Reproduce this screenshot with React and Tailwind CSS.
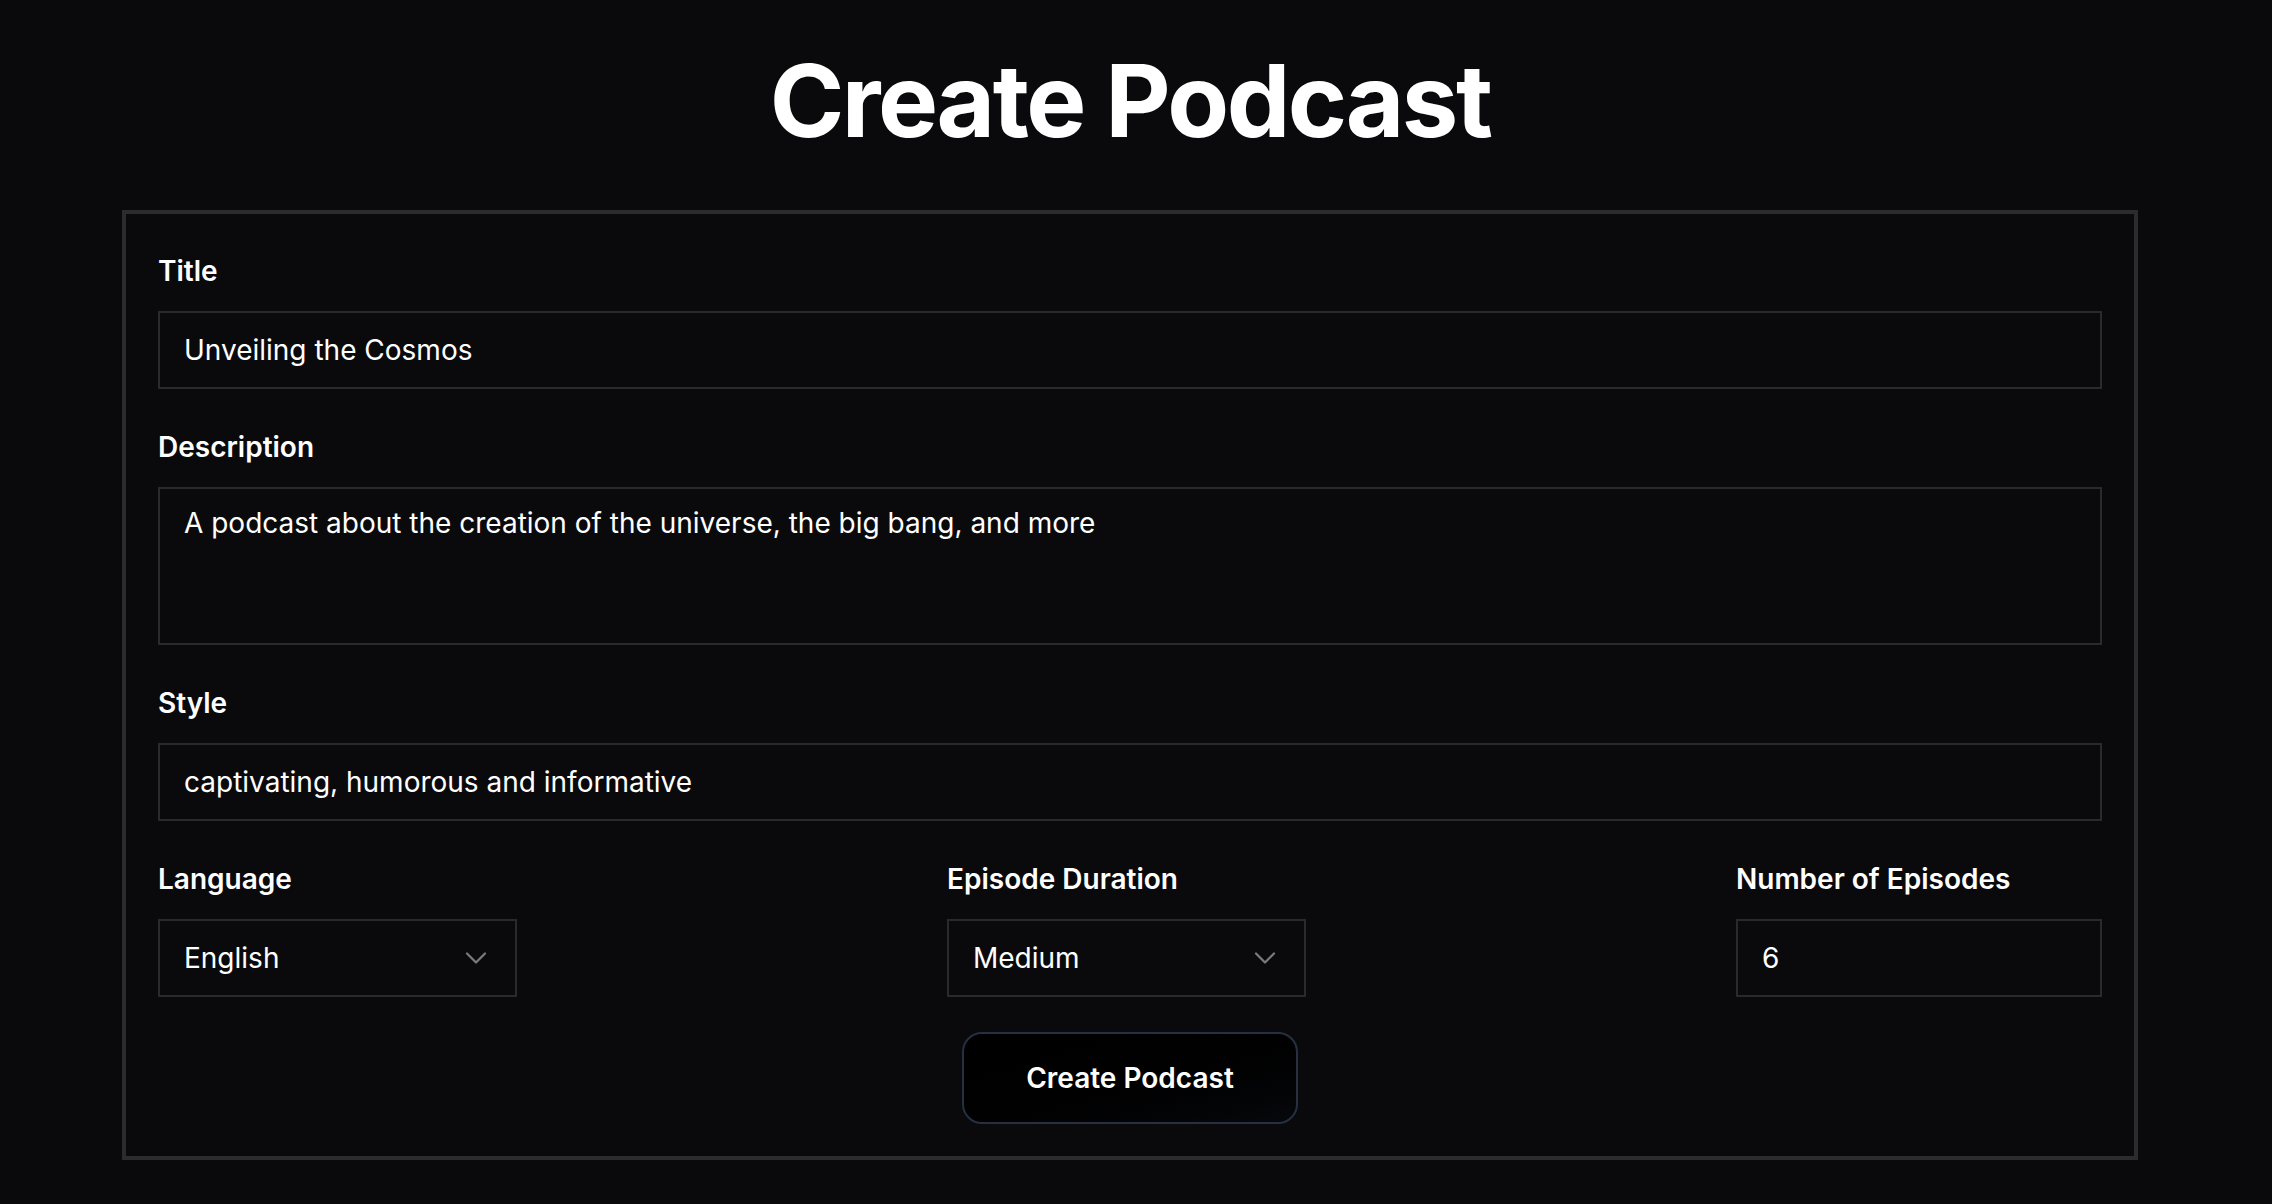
import { ChevronDown } from "lucide-react";

const font = { fontFamily: "Inter, 'Noto Sans', sans-serif" };

function Label({ children }) {
  return (
    <label className="mb-[18px] block text-[28px] font-semibold leading-[44px] text-white">
      {children}
    </label>
  );
}

function TextInput({ value, className = "" }) {
  return (
    <div
      className={`flex h-[78px] items-center border-2 border-[#2a2a2d] px-[24px] text-[28px] text-white ${className}`}
    >
      {value}
    </div>
  );
}

function Select({ value }) {
  return (
    <div className="flex h-[78px] w-[359px] items-center justify-between border-2 border-[#2a2a2d] pl-[24px] pr-[21px] text-[28px] text-white">
      <span>{value}</span>
      <ChevronDown size={36} strokeWidth={1.5} className="text-[#7a7a7e]" />
    </div>
  );
}

export default function App() {
  return (
    <div className="min-h-screen bg-[#0a0a0c] pt-[48px]" style={font}>
      <div className="ml-[122px] w-[2016px]">
        <h1 className="mb-[58px] text-center text-[101px] font-bold leading-[104px] tracking-tight text-white">
          Create Podcast
        </h1>

        <div className="border-4 border-[#2c2c2e] px-[32px] pb-[32px] pt-[35px]">
          <div className="mb-[36px]">
            <Label>Title</Label>
            <TextInput value="Unveiling the Cosmos" />
          </div>

          <div className="mb-[36px]">
            <Label>Description</Label>
            <div className="h-[158px] border-2 border-[#2a2a2d] px-[24px] py-[12px] text-[28px] leading-[44px] text-white">
              A podcast about the creation of the universe, the big bang, and more
            </div>
          </div>

          <div className="mb-[36px]">
            <Label>Style</Label>
            <TextInput value="captivating, humorous and informative" />
          </div>

          <div className="flex justify-between">
            <div>
              <Label>Language</Label>
              <Select value="English" />
            </div>
            <div>
              <Label>Episode Duration</Label>
              <Select value="Medium" />
            </div>
            <div>
              <Label>Number of Episodes</Label>
              <TextInput value="6" className="w-[366px]" />
            </div>
          </div>

          <div className="mt-[35px] flex justify-center">
            <button className="h-[92px] w-[336px] rounded-[20px] border-2 border-[#263041] bg-gradient-to-br from-[#000000] to-[#07080c] text-[28px] font-semibold text-white">
              Create Podcast
            </button>
          </div>
        </div>
      </div>
    </div>
  );
}
